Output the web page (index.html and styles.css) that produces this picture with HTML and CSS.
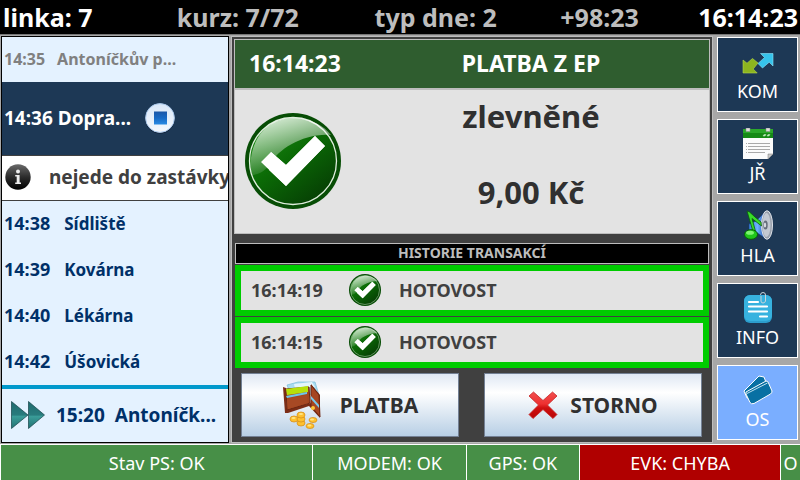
FILE: index.html
```html
<!DOCTYPE html>
<html lang="cs">
<head>
<meta charset="utf-8">
<title>Palubní počítač</title>
<link rel="stylesheet" href="styles.css">
</head>
<body>
<svg class="defs" aria-hidden="true">
  <defs>
    <linearGradient id="disc" x1="0.15" y1="0.1" x2="0.8" y2="0.95">
      <stop offset="0" stop-color="#1a8a12"/><stop offset="0.45" stop-color="#0b6a06"/><stop offset="1" stop-color="#063f04"/>
    </linearGradient>
    <linearGradient id="gloss" x1="0.15" y1="0" x2="0.5" y2="1">
      <stop offset="0" stop-color="#fff" stop-opacity="0.85"/><stop offset="1" stop-color="#fff" stop-opacity="0"/>
    </linearGradient>
    <symbol id="check" viewBox="0 0 96 96">
      <circle cx="48" cy="48" r="48" fill="#074d05"/>
      <circle cx="48" cy="48" r="43.5" fill="url(#disc)" stroke="#dfeedd" stroke-width="1.3"/>
      <path d="M16 49 26 39 41 52 70 23 80 33 41 73Z" fill="#fff"/>
      <path d="M6 62C2 30 20 5 48 5 66 5 79 13 86 22 58 20 33 37 26 50 20 58 14 62 6 62Z" fill="url(#gloss)"/>
      <path d="M26 39 41 52 70 23 80 33 41 73 24 57Z" fill="#fff"/>
    </symbol>
  </defs>
</svg>

<header class="topbar">
  <span class="on">linka: 7</span>
  <span>kurz: 7/72</span>
  <span>typ dne: 2</span>
  <span>+98:23</span>
  <time class="on">16:14:23</time>
</header>

<div class="work">
  <section class="route" aria-label="Zastávky">
    <div class="stop past"><time>14:35</time><span>Antoníčkův p...</span></div>
    <div class="stop current"><time>14:36</time><span>Dopra...</span>
      <svg class="stop-icon" viewBox="0 0 32 32" aria-hidden="true">
        <defs>
          <linearGradient id="ball" x1="0" y1="0" x2="0" y2="1"><stop offset="0" stop-color="#d9e7f8"/><stop offset="1" stop-color="#f4f8fd"/></linearGradient>
          <linearGradient id="sq" x1="0" y1="0" x2="0" y2="1"><stop offset="0" stop-color="#1a56a8"/><stop offset="0.5" stop-color="#1769c4"/><stop offset="1" stop-color="#2a8be4"/></linearGradient>
        </defs>
        <circle cx="16" cy="17" r="14.6" fill="#0c1c33"/>
        <circle cx="16" cy="16" r="14.4" fill="url(#ball)" stroke="#a9c8ec"/>
        <rect x="10" y="9.500" width="13" height="13" fill="url(#sq)"/>
      </svg>
    </div>
    <div class="notice">
      <svg class="info-icon" viewBox="0 0 26 26" aria-hidden="true">
        <defs><linearGradient id="blk" x1="0" y1="0" x2="0" y2="1"><stop offset="0" stop-color="#6a6a6a"/><stop offset="0.5" stop-color="#2c2c2c"/><stop offset="1" stop-color="#000"/></linearGradient></defs>
        <circle cx="13" cy="13" r="12.700" fill="url(#blk)"/>
        <circle cx="13" cy="7.500" r="2" fill="#eee"/>
        <path d="M10.200 11H14.600V18.500H16V20H10.200V18.500H11.700V12.500H10.200Z" fill="#eee"/>
      </svg>
      <span>nejede do zastávky</span>
    </div>
    <div class="stop"><time>14:38</time><span>Sídliště</span></div>
    <div class="stop"><time>14:39</time><span>Kovárna</span></div>
    <div class="stop"><time>14:40</time><span>Lékárna</span></div>
    <div class="stop"><time>14:42</time><span>Úšovická</span></div>
    <div class="terminus">
      <svg class="ff-icon" viewBox="0 0 34 28" aria-hidden="true">
        <defs><linearGradient id="teal" x1="0" y1="0" x2="0" y2="1"><stop offset="0" stop-color="#1f6b6e"/><stop offset="0.500" stop-color="#287b7d"/><stop offset="0.550" stop-color="#3a9c98"/><stop offset="1" stop-color="#217173"/></linearGradient></defs>
        <path d="M.5.5 17 14 .5 27.500ZM17.500.5 33.500 14 17.500 27.500Z" fill="url(#teal)" stroke="#164448" stroke-width=".7"/>
      </svg>
      <time>15:20</time><span>Antoníčk...</span>
    </div>
  </section>

  <main class="desk">
    <section class="card">
      <h1 class="card-head"><time>16:14:23</time><span>PLATBA Z EP</span></h1>
      <div class="card-body">
        <svg class="check-big" aria-hidden="true"><use href="#check"/></svg>
        <div class="fare"><p>zlevněné</p><p>9,00 Kč</p></div>
      </div>
    </section>
    <h2 class="history-title">HISTORIE TRANSAKCÍ</h2>
    <div class="history">
      <div class="entry"><time>16:14:19</time><svg class="check-small" aria-hidden="true"><use href="#check"/></svg><span>HOTOVOST</span></div>
      <div class="entry"><time>16:14:15</time><svg class="check-small" aria-hidden="true"><use href="#check"/></svg><span>HOTOVOST</span></div>
    </div>
    <div class="actions">
      <button type="button" class="action">
        <svg class="wallet" viewBox="0 0 42 48" aria-hidden="true">
          <path d="M5 4 16 1 33 1 37 14 8 12Z" fill="#a9dcf0" stroke="#78bcd9" stroke-width=".7"/>
          <path d="M12 3 30 1 33 6 13 8Z" fill="#e3f5fb"/>
          <path d="M1 6 4 7 5 28 29 22 29 3 38 14V37L27 25 6 32 3 32Z" fill="#7c2d16"/>
          <path d="M4 8 27 6 28 22 5 29Z" fill="#a5451f" stroke="#6d2611"/>
          <path d="M4 8 26 5 26 11 5 14Z" fill="#b7e00a"/>
          <path d="M4 15 25 11 25 13 5 17Z" fill="#6cc6ec"/>
          <path d="M5 18 25 14 26 22 6 28Z" fill="#a74924"/>
          <path d="M29 4 37 14 38 36 29 25Z" fill="#a64521" stroke="#702711"/>
          <path d="M29 15 37 24V27L29 18Z" fill="#78cbee"/>
          <circle cx="31" cy="27" r="2" fill="#ffc737"/>
          <g fill="#ffc12e" stroke="#d8911b" stroke-width=".8">
            <ellipse cx="12" cy="38" rx="4" ry="3"/><ellipse cx="19" cy="42" rx="4" ry="3"/><ellipse cx="19" cy="38" rx="4" ry="3"/><ellipse cx="19" cy="34" rx="4" ry="3"/><ellipse cx="31" cy="39" rx="4" ry="2.500"/><ellipse cx="28" cy="45" rx="4" ry="2.500"/>
          </g>
          <g fill="#ffe584"><ellipse cx="11.500" cy="37" rx="2" ry="1"/><ellipse cx="19" cy="33" rx="2" ry="1"/><ellipse cx="30" cy="38.500" rx="2" ry="1"/><ellipse cx="27.500" cy="44.500" rx="2" ry="1"/></g>
        </svg>
        <span>PLATBA</span>
      </button>
      <button type="button" class="action">
        <svg class="cross" viewBox="0 0 30 28" aria-hidden="true">
          <defs><linearGradient id="red" x1="0" y1="0" x2="0" y2="1"><stop offset="0" stop-color="#f25050"/><stop offset="0.450" stop-color="#ee3030"/><stop offset="0.600" stop-color="#cf1010"/><stop offset="1" stop-color="#b80505"/></linearGradient></defs>
          <path d="M5.500 1 15 9.500 24.500 1 29 5 19.500 14 29 23.500 25 27.500 15 18.500 5 27.500 1 23.500 10.500 14 1 5Z" fill="url(#red)" stroke="#c52525" stroke-width=".8" stroke-linejoin="round"/>
        </svg>
        <span>STORNO</span>
      </button>
    </div>
  </main>

  <nav class="side" aria-label="Menu">
    <button type="button" class="tile">
      <svg viewBox="0 0 32 32" aria-hidden="true">
        <path d="M16 17.500 22.500 11.500 18.500 7.500H31V20L27.200 16.200 20.500 22Z" fill="#36c4ec" stroke="#8fe4fa" stroke-width=".6"/>
        <path d="M1 14 5 17.200 10.500 12.500 16 17 11.200 23 15.200 27H1Z" fill="#8cb51f" stroke="#b6d84a" stroke-width=".6"/>
      </svg><span>KOM</span>
    </button>
    <button type="button" class="tile">
      <svg viewBox="0 0 32 32" aria-hidden="true">
        <path d="M1 9H31V26L26 31H1Z" fill="#fbfbfb"/>
        <path d="M31 26H26V31Z" fill="#c9c9c9" stroke="#777" stroke-width=".5"/>
        <rect x="1" y="1" width="30" height="9" fill="#168a16"/><rect x="1" y="1" width="30" height="4" fill="#2ba82a"/>
        <path d="M4 0H8V3.500H4ZM24 0H28V3.500H24Z" fill="#ddd" stroke="#888" stroke-width=".5"/>
        <path d="M21 8 22 6.500H24L23 8ZM25 8 26 6.500H28L27 8Z" fill="#bfe6bc" stroke="#bfe6bc" stroke-width=".5"/>
        <path d="M4 15.500H28M4 18.500H28M4 21.500H28M4 24.500H23" stroke="#a9a9a9" stroke-dasharray="1 1 30"/>
      </svg><span>JŘ</span>
    </button>
    <button type="button" class="tile">
      <svg viewBox="0 0 32 32" aria-hidden="true">
        <defs><linearGradient id="cone" x1="0" y1="0" x2="1" y2="0"><stop offset="0" stop-color="#3c82dc"/><stop offset="0.500" stop-color="#6fb2ff"/><stop offset="1" stop-color="#1747a4"/></linearGradient></defs>
        <path d="M7 14 14 11 24 1V29L14 22 7 20Z" fill="url(#cone)" stroke="#123a78" stroke-width=".6"/>
        <ellipse cx="25" cy="15" rx="5.500" ry="14.300" fill="#98a0ac" stroke="#dfe3ea"/>
        <ellipse cx="24.500" cy="15" rx="4" ry="12" fill="#c3c9d2"/>
        <ellipse cx="23.500" cy="15" rx="2.200" ry="4.500" fill="#656d7b"/>
        <ellipse cx="23" cy="15" rx="1.200" ry="2.500" fill="#d4d8df"/>
        <path d="M5 1 7.500 2 13 7 19 12 19.500 16 17 14 10 8.500 14.500 25H12Z" fill="#38dc29" stroke="#0b5c0b" stroke-width=".8"/>
        <ellipse cx="9" cy="24.500" rx="6.500" ry="4.800" fill="#20c61a" stroke="#075c07"/>
        <ellipse cx="8" cy="22.800" rx="4" ry="2" fill="#7df470"/>
      </svg><span>HLA</span>
    </button>
    <button type="button" class="tile">
      <svg viewBox="0 0 32 32" aria-hidden="true">
        <rect x="2" y="3" width="28" height="28" rx="6" fill="#2c9dcc"/>
        <rect x="2" y="3" width="28" height="26" rx="6" fill="#37b2df"/>
        <path d="M7 10H16M7 14.500H25M7 19.500H25M18 24.500H25" stroke="#fff" stroke-width="2.200" stroke-linecap="round"/>
        <path d="M19 4V9Q19 11 21 11T23.500 9V3Q23.500 .5 21 .5T18.500 3" fill="none" stroke="#c8d4da" stroke-width="1"/>
      </svg><span>INFO</span>
    </button>
    <button type="button" class="tile active">
      <svg viewBox="0 0 32 32" aria-hidden="true">
        <g fill="#0870a3" stroke="#fff" stroke-width="1" stroke-linejoin="round">
          <path d="M2 17 17 2 22 3 25 11 10 24 5 24Z"/>
          <path d="M4 18 24 7Q26 7 26.500 9L30 17Q30 19 28.500 20L12 29.500Q9 30.500 8 28.500L4 20Z"/>
        </g>
        <path d="M5 19.500 25.500 9" stroke="#bde0ee"/>
      </svg><span>OS</span>
    </button>
  </nav>
</div>

<footer class="status">
  <div class="cell wide">Stav PS: OK</div>
  <div class="cell mid">MODEM: OK</div>
  <div class="cell small">GPS: OK</div>
  <div class="cell large error">EVK: CHYBA</div>
  <div class="cell cut">O</div>
</footer>
</body>
</html>
```
FILE: styles.css
```css
* { box-sizing: border-box; margin: 0; }

body {
  display: flex;
  flex-direction: column;
  min-height: 100vh;
  background: #a7a7a7;
  font-family: "Noto Sans", sans-serif;
  font-weight: 700;
  overflow: hidden;
}

.defs { position: absolute; width: 0; height: 0; }
svg { display: block; flex: none; }

.topbar {
  display: grid;
  grid-template-columns: 174fr 198fr 186fr 138fr auto;
  align-items: center;
  height: 35px;
  padding: 0 2px 0 3px;
  background: #000;
  border-bottom: 1px solid #777;
  color: #bdbdbd;
  font-size: 25px;
  line-height: 34px;
  white-space: nowrap;
}
.topbar .on { color: #fff; }

.work {
  flex: 1;
  display: flex;
  padding: 1px 2px 1px 1px;
}

.route {
  flex: 0 0 228px;
  display: flex;
  flex-direction: column;
  background: #e4f2ff;
  border: 1px solid #000;
  color: #003068;
  font-size: 18px;
  white-space: nowrap;
  overflow: hidden;
}
.stop {
  flex: 0 0 46px;
  display: flex;
  align-items: center;
  gap: 14px;
  padding: 0 0 2px 2px;
}
.stop span { font-size: 17px; }
.stop.past { flex-basis: 45px; gap: 12px; color: #808080; font-size: 16px; }
.stop.past span { font-size: 16px; }
.stop.current {
  flex-basis: 73px;
  gap: 5px;
  background: #1d3855;
  color: #fff;
  font-size: 19px;
}
.stop.current span { font-size: 19px; }
.stop-icon { width: 32px; height: 32px; margin-left: 8px; }
.notice {
  flex: 0 0 46px;
  display: flex;
  align-items: center;
  gap: 18px;
  padding: 0 0 2px 3px;
  background: #fff;
  border-top: 1px solid #404040;
  border-bottom: 1px solid #404040;
  color: #404040;
  font-size: 19px;
}
.info-icon { width: 26px; height: 26px; }
.terminus {
  flex: 1;
  display: flex;
  align-items: center;
  gap: 10px;
  padding: 0 0 2px 9px;
  border-top: 4px solid #0099cc;
  font-size: 19px;
}
.ff-icon { width: 34px; height: 28px; margin-right: 1px; }

.desk {
  flex: 1;
  display: flex;
  flex-direction: column;
  margin: 0 4px 0 2px;
  padding: 2px;
  background: #404040;
  border: 1px solid #bdbdbd;
}
.card { flex: none; border: 1px solid #bdbdbd; background: #e3e3e3; color: #303030; }
.card-head {
  display: flex;
  align-items: center;
  height: 50px;
  padding: 0 0 2px 14px;
  background: #2f5d2f;
  border-bottom: 2px solid #bdbdbd;
  color: #fff;
  font-size: 23px;
}
.card-head time { flex: 0 0 104px; }
.card-head span { flex: 1; text-align: center; }
.card-body { display: flex; align-items: center; height: 143px; padding: 0 0 2px 10px; }
.check-big { width: 96px; height: 96px; }
.fare {
  flex: 1;
  align-self: stretch;
  padding: 4px 0 0 12px;
  text-align: center;
  font-size: 31px;
  line-height: 44px;
}
.fare p + p { margin-top: 32px; }

.history-title {
  height: 21px;
  margin: 9px 1px 1px;
  background: #000;
  border: 1px solid #bdbdbd;
  color: #bdbdbd;
  font-size: 14px;
  line-height: 18px;
  text-align: center;
}
.history { display: flex; flex-direction: column; gap: 1px; padding: 0 1px; }
.entry {
  display: flex;
  align-items: center;
  height: 51px;
  padding: 0 0 2px 10px;
  background: #e3e3e3;
  border: 6px solid #0c0;
  color: #404040;
  font-size: 18px;
}
.entry time { flex: 0 0 98px; }
.check-small { width: 32px; height: 32px; margin-right: 18px; }

.actions { display: flex; gap: 25px; margin-top: 5px; padding: 0 8px 0 7px; }
.action {
  flex: 1;
  display: flex;
  align-items: center;
  justify-content: center;
  gap: 16px;
  height: 64px;
  padding: 0 6px;
  border: 1px solid #738094;
  background: linear-gradient(#dfe8f4, #fff 30%, #b8cfe5);
  color: #303030;
  font: inherit;
  font-size: 21px;
}
.wallet { width: 42px; height: 48px; }
.cross { width: 30px; height: 28px; }
.action .cross + span { margin-left: -4px; }

.side {
  flex: 0 0 81px;
  display: flex;
  flex-direction: column;
  gap: 7px;
  padding-top: 1px;
}
.tile {
  display: flex;
  flex-direction: column;
  align-items: center;
  gap: 1px;
  height: 75px;
  padding: 8px 0 0;
  border: 1px solid #fff;
  background: #1d3855;
  color: #fff;
  font: inherit;
  font-size: 18px;
  font-weight: 400;
  line-height: 24px;
}
.tile svg { width: 32px; height: 32px; }
.tile.active { background: #7aaeff; }

.status {
  display: flex;
  height: 36px;
  border-top: 1px solid #fff;
  background: #fff;
  color: #fff;
  font-size: 18px;
  font-weight: 400;
  line-height: 36px;
  text-align: center;
  white-space: nowrap;
}
.cell { background: #478f47; border-left: 1px solid #fff; }
.wide { flex: 313; }
.mid { flex: 153; }
.small { flex: 113; }
.large { flex: 201; }
.cut { flex: 19; }
.cell.error { background: #b00000; }
```
